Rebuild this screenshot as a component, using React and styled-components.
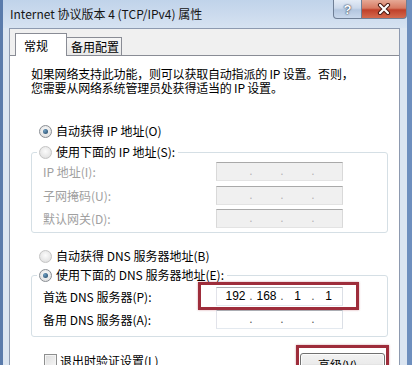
import React from "react";
import styled, { createGlobalStyle } from "styled-components";

const GlobalStyle = createGlobalStyle`
  html, body {
    margin: 0;
    padding: 0;
  }
  body {
    width: 412px;
    height: 365px;
    overflow: hidden;
    font-family: "Noto Sans CJK SC", "Liberation Sans", sans-serif;
  }
`;

const Window = styled.div`
  box-sizing: border-box;
  width: 412px;
  height: 365px;
  display: flex;
  flex-direction: column;
  border-left: 3px solid #5a7bab;
  border-right: 5px solid #6e8fbe;
  background: #dbe5f1;
  overflow: hidden;
`;

const TitleBar = styled.div`
  flex: none;
  height: 28px;
  display: flex;
  align-items: flex-start;
  padding-left: 7px;
  background: linear-gradient(#c0d3ea, #d6e2f1);
`;

const Title = styled.span`
  margin-top: 6px;
  font-size: 12px;
  line-height: 16px;
  color: #141414;
  white-space: nowrap;
`;

const Controls = styled.div`
  margin-left: auto;
  display: flex;
`;

const CtrlButton = styled.div`
  box-sizing: border-box;
  width: ${(p) => p.$w}px;
  height: 19px;
  display: flex;
  align-items: center;
  justify-content: center;
  border: 1px solid #6f7f96;
  border-top: none;
  border-radius: ${(p) => (p.$close ? "0 0 4px 0" : "0 0 0 4px")};
  border-left: ${(p) => (p.$close ? "none" : "1px solid #6f7f96")};
  background: ${(p) =>
    p.$close
      ? "linear-gradient(#e6a996 0%, #d77a62 45%, #c0402a 55%, #d46a4e 100%)"
      : "linear-gradient(#e4ecf6 0%, #cbd8ea 45%, #b3c6df 55%, #c9d8ec 100%)"};
  color: #fff;
  font-family: "Liberation Sans", sans-serif;
  font-weight: bold;
  font-size: 13px;
  text-shadow: 0 0 2px #2b3a52, 0 0 1px #2b3a52;
`;

const Client = styled.div`
  flex: 1;
  display: flex;
  flex-direction: column;
  margin: 0 7px 0 6px;
  border: 1px solid #8d9ab0;
  border-bottom: none;
  background: #f0f0f0;
`;

const TabStrip = styled.div`
  flex: none;
  height: 26px;
  display: flex;
  align-items: flex-end;
  padding-left: 5px;
`;

const Tab = styled.div`
  box-sizing: border-box;
  position: relative;
  z-index: ${(p) => (p.$active ? 2 : 1)};
  height: ${(p) => (p.$active ? 23 : 18)}px;
  width: ${(p) => (p.$active ? 52 : 55)}px;
  margin-bottom: ${(p) => (p.$active ? -1 : 0)}px;
  padding: ${(p) => (p.$active ? "4px 0 0 8px" : "1px 0 0 4px")};
  border: 1px solid #898c95;
  border-bottom: none;
  border-left: ${(p) => (p.$active ? "1px solid #898c95" : "none")};
  background: ${(p) => (p.$active ? "#ffffff" : "linear-gradient(#f6f6f6, #e8e8e8)")};
  font-size: 12px;
  line-height: 16px;
  color: #000;
  white-space: nowrap;
`;

const Panel = styled.div`
  flex: 1;
  display: flex;
  flex-direction: column;
  background: #ffffff;
  border-top: 1px solid #898c95;
  padding: 11px 11px 0 21px;
  font-size: 12px;
  color: #000;
`;

const Desc = styled.p`
  margin: 0;
  font-size: 12px;
  line-height: 14px;
  letter-spacing: -0.2px;
`;

const OptionRow = styled.div`
  display: flex;
  align-items: center;
  gap: 4px;
  height: 16px;
  line-height: 16px;
  margin-top: ${(p) => p.$mt || 0}px;
  margin-left: ${(p) => (p.$inLegend ? 0 : 8)}px;
  color: ${(p) => (p.$disabled ? "#a0a0a0" : "#000")};
  white-space: nowrap;
`;

const Radio = styled.span`
  box-sizing: border-box;
  flex: none;
  width: 13px;
  height: 13px;
  border-radius: 50%;
  border: 1px solid ${(p) => (p.$faded ? "#c4c4c4" : "#8a8e94")};
  background: radial-gradient(circle at 50% 40%, #fbfbfb 0%, #e4e4e4 70%, #d2d2d2 100%);
  display: flex;
  align-items: center;
  justify-content: center;

  &::after {
    content: "";
    display: ${(p) => (p.$checked ? "block" : "none")};
    width: 5px;
    height: 5px;
    border-radius: 50%;
    background: radial-gradient(circle at 35% 35%, #6fa0c4, #1f425e);
  }
`;

const Group = styled.fieldset`
  margin: ${(p) => p.$mt}px 0 0 0;
  padding: ${(p) => p.$pt}px 11px ${(p) => p.$pb}px 11px;
  border: 1px solid #d5dfe5;
  border-radius: 3px;
  min-width: 0;
`;

const Legend = styled.legend`
  padding: 0 3px 0 2px;
  margin-left: -6px;
  background: #fff;
`;

const Fields = styled.div`
  display: grid;
  grid-template-columns: 173px 127px;
  row-gap: ${(p) => p.$gap}px;
`;

const FieldLabel = styled.span`
  display: flex;
  align-items: center;
  height: 19px;
  color: ${(p) => (p.$disabled ? "#a0a0a0" : "#000")};
  white-space: nowrap;
`;

const IpBox = styled.div`
  box-sizing: border-box;
  position: relative;
  height: 19px;
  display: flex;
  align-items: center;
  padding-left: 5px;
  border: 1px solid;
  border-color: ${(p) =>
    p.$disabled ? "#a9a9a9 #d9d9d9 #e3e3e3 #d9d9d9" : "#abadb3 #dbdfe6 #e3e9ef #e2e3ea"};
  background: ${(p) => (p.$disabled ? "#f0f0f0" : "#ffffff")};
  font-family: "Liberation Sans", sans-serif;
  font-size: 12px;
  color: #000;
`;

const Octet = styled.span`
  width: 27px;
  text-align: center;
  line-height: 17px;
`;

const Dot = styled.span`
  width: 4px;
  text-align: center;
  line-height: 17px;
  color: ${(p) => (p.$disabled ? "#b4b4b4" : "#555")};
`;

const Highlight = styled.div`
  position: absolute;
  top: ${(p) => p.$t}px;
  left: ${(p) => p.$l}px;
  right: ${(p) => p.$r}px;
  bottom: ${(p) => p.$b}px;
  border: 3px solid #9e2d3b;
  box-shadow: 0 0 2px rgba(158, 45, 59, 0.45);
  pointer-events: none;
`;

const BottomRow = styled.div`
  display: flex;
  justify-content: space-between;
  align-items: flex-start;
  margin-top: 16px;
`;

const CheckRow = styled.label`
  display: flex;
  align-items: center;
  gap: 3px;
  height: 16px;
  margin-left: 13px;
  margin-top: -1px;
  white-space: nowrap;
`;

const Checkbox = styled.span`
  box-sizing: border-box;
  width: 13px;
  height: 13px;
  border: 1px solid #8e8f8f;
  background: linear-gradient(135deg, #dcdcdc, #f6f6f6);
  box-shadow: inset 0 0 0 1px #f4f4f4;
`;

const ButtonWrap = styled.div`
  position: relative;
  margin-right: 3px;
`;

const Button = styled.button`
  box-sizing: border-box;
  width: 85px;
  height: 23px;
  padding: 0;
  border: 1px solid #707070;
  border-radius: 3px;
  background: linear-gradient(#f2f2f2 0%, #ebebeb 48%, #dddddd 52%, #cfcfcf 100%);
  box-shadow: inset 0 0 0 1px #fcfcfc;
  font-family: "Noto Sans CJK SC", sans-serif;
  font-size: 12px;
  line-height: 14px;
  color: #000;
`;

const CloseGlyph = () => (
  <svg width="14" height="12" viewBox="0 0 14 12">
    <path d="M3 2 L11 10 M11 2 L3 10" stroke="#4a1a12" strokeWidth="4.2" strokeLinecap="round" />
    <path d="M3 2 L11 10 M11 2 L3 10" stroke="#ffffff" strokeWidth="2.2" strokeLinecap="round" />
  </svg>
);

const IpField = ({ value, disabled, children }) => {
  const parts = value || ["", "", "", ""];
  return (
    <IpBox $disabled={disabled}>
      <Octet>{parts[0]}</Octet>
      <Dot $disabled={disabled}>.</Dot>
      <Octet>{parts[1]}</Octet>
      <Dot $disabled={disabled}>.</Dot>
      <Octet>{parts[2]}</Octet>
      <Dot $disabled={disabled}>.</Dot>
      <Octet>{parts[3]}</Octet>
      {children}
    </IpBox>
  );
};

const App = () => {
  return (
    <>
      <GlobalStyle />
      <Window>
        <TitleBar>
          <Title>Internet 协议版本 4 (TCP/IPv4) 属性</Title>
          <Controls>
            <CtrlButton $w={29}>?</CtrlButton>
            <CtrlButton $w={45} $close>
              <CloseGlyph />
            </CtrlButton>
          </Controls>
        </TitleBar>
        <Client>
          <TabStrip>
            <Tab $active>常规</Tab>
            <Tab>备用配置</Tab>
          </TabStrip>
          <Panel>
            <Desc>
              如果网络支持此功能，则可以获取自动指派的 IP 设置。否则，
              <br />
              您需要从网络系统管理员处获得适当的 IP 设置。
            </Desc>

            <OptionRow $mt={28}>
              <Radio $checked />
              自动获得 IP 地址(O)
            </OptionRow>

            <Group $mt={5} $pt={2} $pb={4}>
              <Legend>
                <OptionRow $inLegend>
                  <Radio $faded />
                  使用下面的 IP 地址(S):
                </OptionRow>
              </Legend>
              <Fields $gap={4.5}>
                <FieldLabel $disabled>IP 地址(I):</FieldLabel>
                <IpField disabled />
                <FieldLabel $disabled>子网掩码(U):</FieldLabel>
                <IpField disabled />
                <FieldLabel $disabled>默认网关(D):</FieldLabel>
                <IpField disabled />
              </Fields>
            </Group>

            <OptionRow $mt={15}>
              <Radio $faded />
              自动获得 DNS 服务器地址(B)
            </OptionRow>

            <Group $mt={3} $pt={4} $pb={7}>
              <Legend>
                <OptionRow $inLegend>
                  <Radio $checked />
                  使用下面的 DNS 服务器地址(E):
                </OptionRow>
              </Legend>
              <Fields $gap={4}>
                <FieldLabel>首选 DNS 服务器(P):</FieldLabel>
                <IpField value={["192", "168", "1", "1"]}>
                  <Highlight $t={-6} $l={-19} $r={-17} $b={-5} />
                </IpField>
                <FieldLabel>备用 DNS 服务器(A):</FieldLabel>
                <IpField />
              </Fields>
            </Group>

            <BottomRow>
              <CheckRow>
                <Checkbox />
                退出时验证设置(L)
              </CheckRow>
              <ButtonWrap>
                <Button>高级(V)...</Button>
                <Highlight $t={-8} $l={-4} $r={-4} $b={-12} />
              </ButtonWrap>
            </BottomRow>
          </Panel>
        </Client>
      </Window>
    </>
  );
};

export default App;
